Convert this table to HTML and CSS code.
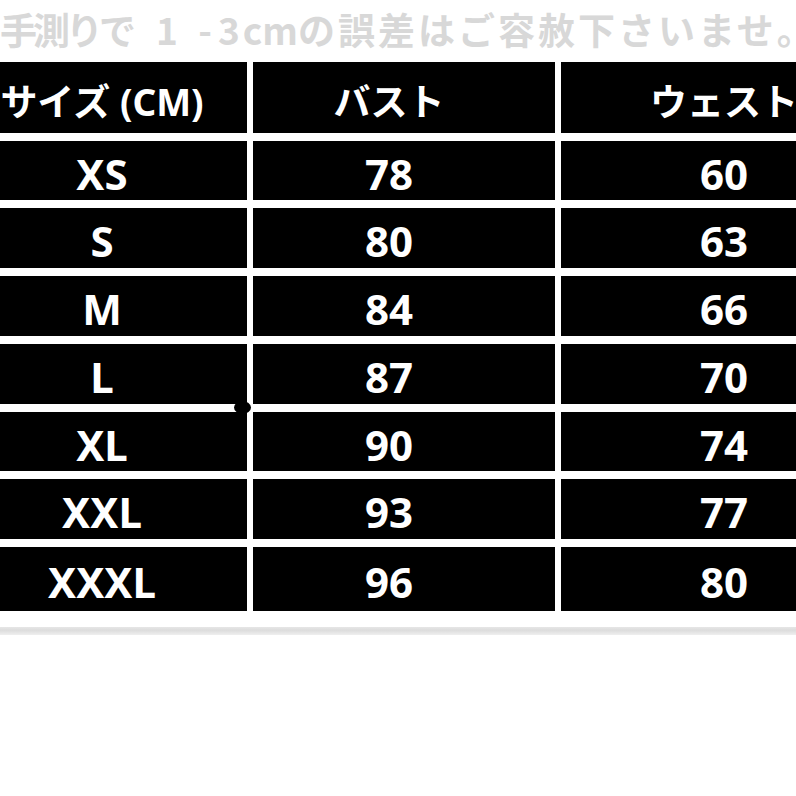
FILE: index.html
```html
<!DOCTYPE html>
<html lang="ja">
<head>
<meta charset="utf-8">
<title>サイズ表</title>
<link rel="stylesheet" href="styles.css">
</head>
<body>
<div class="page">
  <div class="note"><span class="tight">手測りで</span><span class="wide">1 -</span>3<span class="unit">cm</span>の誤差はご容赦下さいませ。</div>
  <div class="chart">
    <div class="cell head c1">サイズ (CM)</div>
    <div class="cell head c2">バスト</div>
    <div class="cell head c3">ウェスト</div>

    <div class="cell c1">XS</div><div class="cell c2">78</div><div class="cell c3">60</div>
    <div class="cell c1">S</div><div class="cell c2">80</div><div class="cell c3">63</div>
    <div class="cell c1">M</div><div class="cell c2">84</div><div class="cell c3">66</div>
    <div class="cell c1">L</div><div class="cell c2">87</div><div class="cell c3">70</div>
    <div class="cell c1">XL</div><div class="cell c2">90</div><div class="cell c3">74</div>
    <div class="cell c1">XXL</div><div class="cell c2">93</div><div class="cell c3">77</div>
    <div class="cell c1">XXXL</div><div class="cell c2">96</div><div class="cell c3">80</div>
    <div class="blot"></div>
  </div>
  <div class="rule"></div>
</div>
</body>
</html>
```

FILE: styles.css
```css
html, body {
  margin: 0;
  padding: 0;
  background: #ffffff;
  overflow: hidden;
}

.page {
  width: 796px;
  height: 796px;
  overflow: hidden;
  font-family: "Noto Sans CJK JP", "Noto Sans", sans-serif;
}

.note {
  height: 62px;
  display: flex;
  align-items: center;
  white-space: pre;
  font-size: 37px;
  font-weight: 700;
  letter-spacing: 3px;
  color: #d8d8d8;
  line-height: 1;
  padding-bottom: 4px;
  box-sizing: border-box;
}

.tight {
  letter-spacing: -4px;
  margin-right: 4px;
}

.wide {
  letter-spacing: 6px;
  margin-left: 20px;
}

.unit {
  letter-spacing: 0;
}

.chart {
  position: relative;
  display: grid;
  grid-template-columns: 247px 302px 326px;
  grid-template-rows: 71px 59px 60px 60px 60px 59px 60px 64px;
  column-gap: 6px;
  row-gap: 8px;
  width: 900px;
}

.cell {
  background: #000000;
  color: #ffffff;
  display: flex;
  align-items: center;
  justify-content: center;
  white-space: nowrap;
  font-family: "Noto Sans", "Noto Sans CJK JP", sans-serif;
  font-weight: 700;
  font-size: 42px;
  line-height: 1;
  padding-top: 6px;
  box-sizing: border-box;
}

.head {
  font-size: 37px;
  padding-top: 8px;
}

.c1 {
  padding-right: 43px;
}

.c2 {
  padding-right: 30px;
}

.blot {
  position: absolute;
  left: 234px;
  top: 339px;
  width: 17px;
  height: 13px;
  border-radius: 50%;
  background: #000000;
}

.rule {
  margin-top: 16px;
  height: 8px;
  background: linear-gradient(#e6e6e6, #dcdcdc 40%, #efefef);
}
```
